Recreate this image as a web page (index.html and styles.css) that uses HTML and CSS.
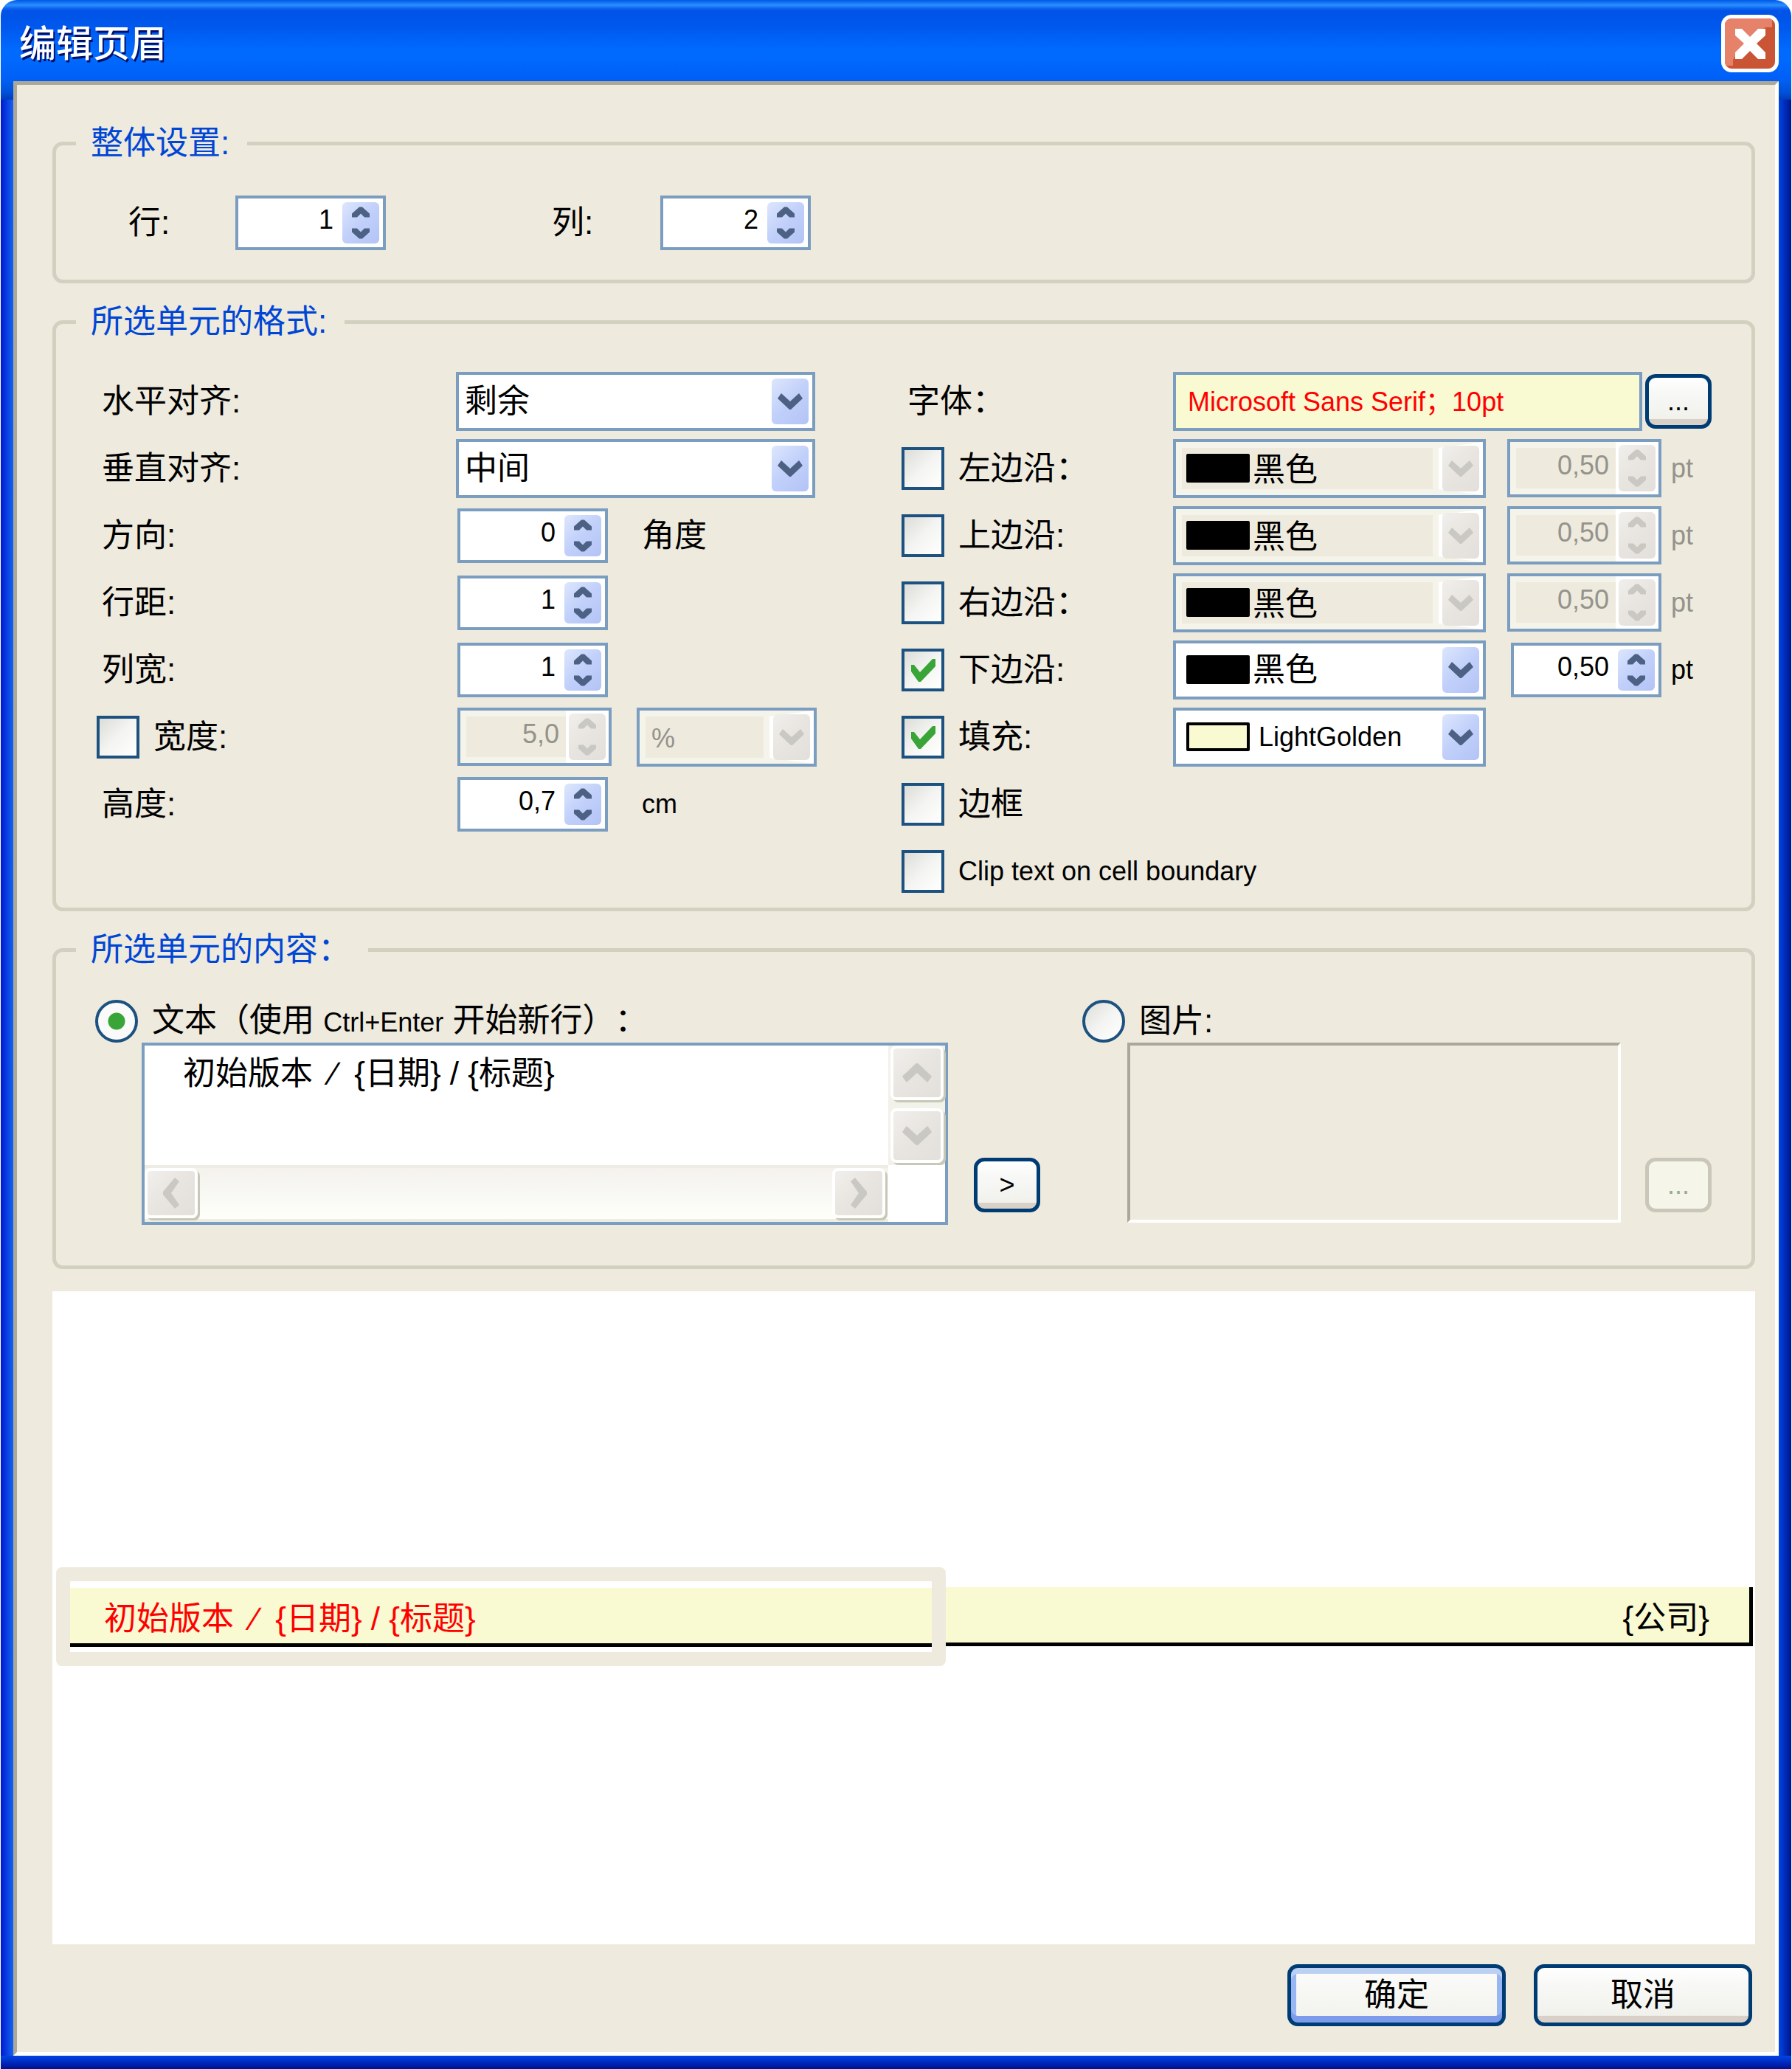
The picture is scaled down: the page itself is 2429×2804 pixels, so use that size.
FILE: index.html
```html
<!DOCTYPE html>
<html lang="zh-CN">
<head>
    <meta charset="UTF-8">
    <meta name="viewport" content="width=device-width, initial-scale=1.0">
    <title>编辑页眉</title>
    <link rel="stylesheet" href="styles.css">
</head>
<body>
    <!-- 共用图标 -->
    <svg class="icon-defs" aria-hidden="true">
        <symbol id="icon-up" viewBox="0 0 24 14"><path d="M0 14V9L10 0h4L24 9v5h-7l-5-5-5 5z"/></symbol>
        <symbol id="icon-down" viewBox="0 0 24 14"><path d="M0 0v5l10 9h4L24 5V0h-7l-5 5-5-5z"/></symbol>
        <symbol id="icon-drop" viewBox="0 0 34 22"><path d="M5 0L17 11 29 0l5 7L18 22h-2L0 7z"/></symbol>
        <symbol id="icon-rise" viewBox="0 0 34 22"><path d="M5 22L17 11 29 22l5-7L18 0h-2L0 15z"/></symbol>
    </svg>

    <div class="window">
        <div class="title-bar">
            <h1>编辑页眉</h1>
            <button class="close-btn" type="button" aria-label="关闭">
                <svg viewBox="0 0 68 68">
                    <path d="M0 0H64V12H56L42 18 20 42 11 56V64H0z" fill="#e6826a"/>
                    <path d="M14 14h9l11 11 11-11h10v9L43 34l12 12v9H45L34 44 23 55h-9V46l12-12L14 23z" fill="#fff"/>
                </svg>
            </button>
        </div>

        <form class="window-body">
            <fieldset class="group general">
                <legend>整体设置:</legend>
                <div class="general-row">
                    <label for="rows">行:</label>
                    <div class="spin">
                        <input type="text" id="rows" value="1">
                        <div class="spin-buttons">
                            <button type="button" aria-label="增加"><svg><use href="#icon-up"/></svg></button>
                            <button type="button" aria-label="减少"><svg><use href="#icon-down"/></svg></button>
                        </div>
                    </div>
                    <label for="cols" class="cols-label">列:</label>
                    <div class="spin">
                        <input type="text" id="cols" value="2">
                        <div class="spin-buttons">
                            <button type="button" aria-label="增加"><svg><use href="#icon-up"/></svg></button>
                            <button type="button" aria-label="减少"><svg><use href="#icon-down"/></svg></button>
                        </div>
                    </div>
                </div>
            </fieldset>

            <fieldset class="group format">
                <legend>所选单元的格式:</legend>
                <div class="format-columns">
                    <!-- 左列: 对齐和尺寸 -->
                    <div class="format-left">
                        <div class="row">
                            <label class="name" for="halign">水平对齐:</label>
                            <div class="combo wide">
                                <select id="halign"><option>剩余</option></select>
                                <span class="combo-arrow"><svg><use href="#icon-drop"/></svg></span>
                            </div>
                        </div>
                        <div class="row">
                            <label class="name" for="valign">垂直对齐:</label>
                            <div class="combo wide">
                                <select id="valign"><option>中间</option></select>
                                <span class="combo-arrow"><svg><use href="#icon-drop"/></svg></span>
                            </div>
                        </div>
                        <div class="row">
                            <label class="name" for="angle">方向:</label>
                            <div class="spin">
                                <input type="text" id="angle" value="0">
                                <div class="spin-buttons">
                                    <button type="button" aria-label="增加"><svg><use href="#icon-up"/></svg></button>
                                    <button type="button" aria-label="减少"><svg><use href="#icon-down"/></svg></button>
                                </div>
                            </div>
                            <span class="unit">角度</span>
                        </div>
                        <div class="row">
                            <label class="name" for="rowspan">行距:</label>
                            <div class="spin">
                                <input type="text" id="rowspan" value="1">
                                <div class="spin-buttons">
                                    <button type="button" aria-label="增加"><svg><use href="#icon-up"/></svg></button>
                                    <button type="button" aria-label="减少"><svg><use href="#icon-down"/></svg></button>
                                </div>
                            </div>
                        </div>
                        <div class="row">
                            <label class="name" for="colspan">列宽:</label>
                            <div class="spin">
                                <input type="text" id="colspan" value="1">
                                <div class="spin-buttons">
                                    <button type="button" aria-label="增加"><svg><use href="#icon-up"/></svg></button>
                                    <button type="button" aria-label="减少"><svg><use href="#icon-down"/></svg></button>
                                </div>
                            </div>
                        </div>
                        <div class="row">
                            <div class="name check">
                                <input type="checkbox" id="use-width">
                                <label for="use-width">宽度:</label>
                            </div>
                            <div class="spin disabled">
                                <input type="text" value="5,0" aria-label="宽度" disabled>
                                <div class="spin-buttons">
                                    <button type="button" aria-label="增加" disabled><svg><use href="#icon-up"/></svg></button>
                                    <button type="button" aria-label="减少" disabled><svg><use href="#icon-down"/></svg></button>
                                </div>
                            </div>
                            <div class="combo percent disabled">
                                <select class="latin" aria-label="宽度单位" disabled><option>%</option></select>
                                <span class="combo-arrow"><svg><use href="#icon-drop"/></svg></span>
                            </div>
                        </div>
                        <div class="row">
                            <label class="name" for="height">高度:</label>
                            <div class="spin">
                                <input type="text" id="height" value="0,7">
                                <div class="spin-buttons">
                                    <button type="button" aria-label="增加"><svg><use href="#icon-up"/></svg></button>
                                    <button type="button" aria-label="减少"><svg><use href="#icon-down"/></svg></button>
                                </div>
                            </div>
                            <span class="unit latin">cm</span>
                        </div>
                    </div>

                    <!-- 右列: 字体和边框 -->
                    <div class="format-right">
                        <div class="row">
                            <label class="name" for="font">字体：</label>
                            <input type="text" class="font-box latin" id="font" value="Microsoft Sans Serif；10pt" readonly>
                            <button type="button" class="btn small">...</button>
                        </div>
                        <div class="row">
                            <div class="name check">
                                <input type="checkbox" id="edge-left">
                                <label for="edge-left">左边沿：</label>
                            </div>
                            <div class="combo color disabled">
                                <select aria-label="左边沿颜色" disabled><option>黑色</option></select>
                                <span class="swatch black"></span>
                                <span class="combo-arrow"><svg><use href="#icon-drop"/></svg></span>
                            </div>
                            <div class="spin disabled">
                                <input type="text" value="0,50" aria-label="左边沿宽度" disabled>
                                <div class="spin-buttons">
                                    <button type="button" aria-label="增加" disabled><svg><use href="#icon-up"/></svg></button>
                                    <button type="button" aria-label="减少" disabled><svg><use href="#icon-down"/></svg></button>
                                </div>
                            </div>
                            <span class="unit latin disabled">pt</span>
                        </div>
                        <div class="row">
                            <div class="name check">
                                <input type="checkbox" id="edge-top">
                                <label for="edge-top">上边沿:</label>
                            </div>
                            <div class="combo color disabled">
                                <select aria-label="上边沿颜色" disabled><option>黑色</option></select>
                                <span class="swatch black"></span>
                                <span class="combo-arrow"><svg><use href="#icon-drop"/></svg></span>
                            </div>
                            <div class="spin disabled">
                                <input type="text" value="0,50" aria-label="上边沿宽度" disabled>
                                <div class="spin-buttons">
                                    <button type="button" aria-label="增加" disabled><svg><use href="#icon-up"/></svg></button>
                                    <button type="button" aria-label="减少" disabled><svg><use href="#icon-down"/></svg></button>
                                </div>
                            </div>
                            <span class="unit latin disabled">pt</span>
                        </div>
                        <div class="row">
                            <div class="name check">
                                <input type="checkbox" id="edge-right">
                                <label for="edge-right">右边沿：</label>
                            </div>
                            <div class="combo color disabled">
                                <select aria-label="右边沿颜色" disabled><option>黑色</option></select>
                                <span class="swatch black"></span>
                                <span class="combo-arrow"><svg><use href="#icon-drop"/></svg></span>
                            </div>
                            <div class="spin disabled">
                                <input type="text" value="0,50" aria-label="右边沿宽度" disabled>
                                <div class="spin-buttons">
                                    <button type="button" aria-label="增加" disabled><svg><use href="#icon-up"/></svg></button>
                                    <button type="button" aria-label="减少" disabled><svg><use href="#icon-down"/></svg></button>
                                </div>
                            </div>
                            <span class="unit latin disabled">pt</span>
                        </div>
                        <div class="row">
                            <div class="name check">
                                <input type="checkbox" id="edge-bottom" checked>
                                <label for="edge-bottom">下边沿:</label>
                            </div>
                            <div class="combo color">
                                <select aria-label="下边沿颜色"><option>黑色</option></select>
                                <span class="swatch black"></span>
                                <span class="combo-arrow"><svg><use href="#icon-drop"/></svg></span>
                            </div>
                            <div class="spin">
                                <input type="text" value="0,50" aria-label="下边沿宽度">
                                <div class="spin-buttons">
                                    <button type="button" aria-label="增加"><svg><use href="#icon-up"/></svg></button>
                                    <button type="button" aria-label="减少"><svg><use href="#icon-down"/></svg></button>
                                </div>
                            </div>
                            <span class="unit latin">pt</span>
                        </div>
                        <div class="row">
                            <div class="name check">
                                <input type="checkbox" id="fill" checked>
                                <label for="fill">填充:</label>
                            </div>
                            <div class="combo color fill">
                                <select class="latin" aria-label="填充颜色"><option>LightGolden</option></select>
                                <span class="swatch"></span>
                                <span class="combo-arrow"><svg><use href="#icon-drop"/></svg></span>
                            </div>
                        </div>
                        <div class="row">
                            <div class="name check">
                                <input type="checkbox" id="frame">
                                <label for="frame">边框</label>
                            </div>
                        </div>
                        <div class="row">
                            <div class="name check">
                                <input type="checkbox" id="clip">
                                <label class="latin" for="clip">Clip text on cell boundary</label>
                            </div>
                        </div>
                    </div>
                </div>
            </fieldset>

            <fieldset class="group content">
                <legend>所选单元的内容：</legend>
                <div class="content-columns">
                    <div class="content-text">
                        <div class="check">
                            <input type="radio" name="content" id="type-text" checked>
                            <label for="type-text">文本（使用 <span class="latin">Ctrl+Enter</span> 开始新行）：</label>
                        </div>
                        <div class="editor">
                            <textarea aria-label="文本">初始版本  ∕  {日期} / {标题}</textarea>
                            <div class="scroll vertical">
                                <button type="button" aria-label="向上" disabled><svg><use href="#icon-rise"/></svg></button>
                                <button type="button" aria-label="向下" disabled><svg><use href="#icon-drop"/></svg></button>
                            </div>
                            <div class="scroll horizontal">
                                <button type="button" aria-label="向左" disabled><svg class="tall" viewBox="0 0 22 42"><path d="M22 5L11 21 22 37l-6 5L0 23v-4L16 0z"/></svg></button>
                                <button type="button" aria-label="向右" disabled><svg class="tall" viewBox="0 0 22 42"><path d="M0 5l11 16L0 37l6 5 16-19v-4L6 0z"/></svg></button>
                            </div>
                        </div>
                    </div>
                    <button type="button" class="btn small">&gt;</button>
                    <div class="content-image">
                        <div class="check">
                            <input type="radio" name="content" id="type-image">
                            <label for="type-image">图片:</label>
                        </div>
                        <div class="image-box"></div>
                    </div>
                    <button type="button" class="btn small" disabled>...</button>
                </div>
            </fieldset>

            <div class="preview">
                <div class="cell selected"><span>初始版本  ∕  {日期} / {标题}</span></div>
                <div class="cell company"><span>{公司}</span></div>
            </div>

            <div class="actions">
                <button type="button" class="btn default">确定</button>
                <button type="button" class="btn">取消</button>
            </div>
        </form>
    </div>
</body>
</html>
```
FILE: styles.css
```css
* {
    box-sizing: border-box;
    margin: 0;
    padding: 0;
}

body {
    padding: 0 1px;
    font-family: 'Liberation Sans', 'Noto Sans CJK SC', sans-serif;
    font-size: 44px;
    line-height: 44px;
    text-spacing-trim: space-all;
    color: #000;
    background: #fff;
}

button, input, select, textarea {
    font: inherit;
    color: inherit;
}

button, select {
    cursor: pointer;
}

.latin {
    font-size: 36px;
}

.icon-defs {
    display: none;
}

/* 窗口 */
.window {
    display: flex;
    flex-direction: column;
    min-height: 100vh;
    padding: 0 17px 18px;
    border-radius: 22px 22px 0 0;
    background:
        linear-gradient(#0060f0, #0050d8 16px, #003db8) left 110px / 17px 25px no-repeat,
        linear-gradient(#0060f0, #0050d8 16px, #003db8) right 110px / 17px 25px no-repeat,
        linear-gradient(#0058e8, #2a8fff 7px, #0a5eee 12px, #0053e5 15px, #0058ee 36px, #006aff 68px, #006aff 78px, #005ef5 110px) top / 100% 110px no-repeat,
        linear-gradient(#0044e8, #000f90) bottom / 100% 18px no-repeat,
        linear-gradient(90deg, #0019cf, #1464f2) left / 17px 100% no-repeat,
        linear-gradient(90deg, #0046e6, #00138c) right / 17px 100% no-repeat;
}

.title-bar {
    display: flex;
    align-items: center;
    justify-content: space-between;
    height: 110px;
    padding: 8px 0 0 8px;
}

.title-bar h1 {
    padding-top: 2px;
    font-size: 50px;
    font-weight: 500;
    line-height: 60px;
    color: #fff;
    text-shadow: 2px 3px 0 #00116b;
}

.close-btn {
    width: 78px;
    height: 78px;
    border: 5px solid #fff;
    border-radius: 14px;
    background: #c95535;
    overflow: hidden;
}

.close-btn svg {
    display: block;
    width: 68px;
    height: 68px;
}

.window-body {
    flex: 1;
    display: flex;
    flex-direction: column;
    gap: 30px;
    padding: 57px 27px 35px 48px;
    border: 5px solid;
    border-color: #aca899 #fff #fff #aca899;
    background: #eeeade;
}

/* 分组框 */
.group {
    min-width: 0;
    border: 5px solid #d2d1bf;
    border-radius: 14px;
}

.group legend {
    margin-left: 27px;
    padding: 0 24px 0 20px;
    color: #0046d5;
}

.general-row {
    display: flex;
    align-items: center;
    padding: 49px 0 40px 98px;
}

.general-row label {
    width: 145px;
}

.general-row .cols-label {
    width: 147px;
    margin-left: 225px;
}

.format-columns {
    display: flex;
    padding: 40px 0 4px;
}

.format-left {
    flex: 0 0 1146px;
    padding-left: 62px;
}

.format-right {
    flex: 1;
}

.row {
    display: flex;
    align-items: center;
    height: 91px;
}

.name {
    flex: none;
    width: 482px;
}

.format-left .check.name {
    margin-left: -7px;
    width: 489px;
}

.format-right .name {
    width: 368px;
    white-space: nowrap;
}

.format-right label.name {
    padding-left: 8px;
}

.format-left .combo.wide {
    margin-left: -2px;
}

.unit {
    margin-left: 46px;
}

.format-right .unit {
    margin-left: 13px;
}

.unit.disabled {
    color: #94938c;
}

/* 复选框和单选框 */
.check {
    display: flex;
    align-items: center;
    gap: 19px;
}

.check input {
    flex: none;
    appearance: none;
    width: 58px;
    height: 58px;
    border: 4px solid #1c5180;
    background: linear-gradient(135deg, #dcdcd8, #f4f4f2 50%, #fff);
}

.check input[type="checkbox"]:checked {
    background: url("data:image/svg+xml,%3Csvg xmlns='http://www.w3.org/2000/svg' viewBox='0 0 50 50'%3E%3Cpath d='M9 18v9l10 14h3l20-21V10h-4L21 28l-8-10z' fill='%233aa537'/%3E%3C/svg%3E"), linear-gradient(135deg, #dcdcd8, #f4f4f2 50%, #fff);
}

.check input[type="radio"] {
    border-radius: 50%;
}

.check input[type="radio"]:checked {
    background: radial-gradient(circle, #3aa537 11px, #fafafa 12px);
}

/* 数字微调框 */
.spin {
    flex: none;
    display: flex;
    width: 204px;
    height: 74px;
    padding: 5px;
    border: 4px solid #7a9dc0;
    background: #fff;
}

.spin input {
    flex: 1;
    min-width: 0;
    padding: 0 12px 8px 0;
    border: 0;
    outline: 0;
    background: none;
    font-size: 36px;
    text-align: right;
}

.spin-buttons {
    display: flex;
    flex-direction: column;
    justify-content: space-between;
    width: 50px;
    padding: 6px 0;
    border-radius: 6px;
    background: linear-gradient(135deg, #dde6fd, #c1d0fa 50%, #b3c3f5);
}

.spin-buttons button {
    height: 15px;
    border: 0;
    background: none;
}

.spin-buttons svg {
    display: block;
    width: 24px;
    height: 15px;
    margin: 0 auto;
    fill: #4d6185;
}

.spin.disabled {
    width: 209px;
    height: 79px;
    padding: 4px;
}

.spin.disabled input {
    margin: -4px 4px -4px -4px;
    padding: 0 9px 8px 0;
    border: 8px solid #f5f4ea;
    border-right-width: 0;
    background: #eeeade;
    color: #94938c;
}

.spin.disabled .spin-buttons,
.combo.disabled .combo-arrow {
    background: linear-gradient(135deg, #f1efec, #e8e5e0 50%, #e3dfda);
}

.disabled svg {
    fill: #c9c8c2;
}

/* 下拉框 */
.combo {
    flex: none;
    display: grid;
    grid-template-columns: auto 1fr auto;
    grid-template-rows: 100%;
    align-items: center;
    height: 80px;
    border: 4px solid #7a9dc0;
    background: #fff;
}

.combo select {
    grid-area: 1 / 1 / 2 / 4;
    appearance: none;
    width: 100%;
    height: 100%;
    padding-left: 8px;
    border: 0;
    outline: 0;
    background: none;
    line-height: 60px;
    opacity: 1;
}

.combo-arrow {
    grid-area: 1 / 3;
    display: flex;
    align-items: center;
    justify-content: center;
    width: 50px;
    height: 62px;
    margin-right: 5px;
    border-radius: 6px;
    background: linear-gradient(135deg, #dde6fd, #c1d0fa 50%, #b3c3f5);
    pointer-events: none;
}

.combo-arrow svg {
    width: 34px;
    height: 22px;
    fill: #4d6185;
}

.combo.disabled .combo-arrow svg {
    fill: #c9c8c2;
}

.combo.disabled select {
    border: 8px solid #f5f4ea;
    border-right: 60px solid #fff;
    background: #eeeade;
    box-shadow: inset -8px 0 0 #f5f4ea;
}

.combo.wide {
    width: 487px;
}

.combo.percent {
    width: 244px;
    margin-left: 34px;
}

.combo.percent select {
    color: #94938c;
}

.combo.color {
    width: 424px;
}

.combo.color select {
    padding-left: 104px;
}

.combo.color.disabled select {
    padding-left: 96px;
    color: #000;
}

.combo.color.fill select {
    padding-left: 112px;
}

.combo.color + .spin {
    margin-left: 34px;
}

.combo.color + .spin.disabled {
    margin-left: 29px;
}

.swatch {
    grid-area: 1 / 1;
    width: 86px;
    height: 39px;
    margin-left: 14px;
    border: 4px solid #000;
    border-radius: 2px;
    background: #f9f9d2;
    pointer-events: none;
}

.swatch.black {
    background: #000;
}

.font-box {
    width: 636px;
    height: 80px;
    margin-right: 4px;
    padding: 0 16px 6px;
    border: 4px solid #7a9dc0;
    background: #f9f9d2;
    color: #f00;
}

/* 按钮 */
.btn {
    width: 296px;
    height: 84px;
    border: 5px solid #003c74;
    border-radius: 14px;
    background: linear-gradient(#fff, #f8f8f7 30%, #f1f1ec 87%, #d9d0c8 88%, #d9d0c8);
}

.btn.small {
    flex: none;
    width: 90px;
    height: 74px;
    font-size: 36px;
}

.btn:disabled {
    border-color: #cac7b9;
    background: #f5f5ea;
    color: #9aab8e;
}

.btn.default {
    background: linear-gradient(#fcfcfb, #f1f1ec) padding-box;
    box-shadow: inset 0 8px 0 #bcd0f2, inset 0 -9px 0 #7d9beb, inset 7px 0 0 #98b6f2, inset -7px 0 0 #98b6f2;
}

/* 单元内容 */
.content-columns {
    display: flex;
    align-items: flex-end;
    padding: 46px 54px 55px 53px;
}

.content-columns .btn {
    margin-bottom: 17px;
}

.content-text {
    flex: 0 0 1156px;
    margin-right: 35px;
}

.editor {
    display: grid;
    grid-template-columns: 1fr 77px;
    grid-template-rows: 162px 77px;
    height: 247px;
    margin-left: 63px;
    border: 4px solid #7a9dc0;
    background: #fff;
}

.editor textarea {
    padding: 16px 52px;
    border: 0;
    outline: 0;
    resize: none;
    overflow: hidden;
    background: none;
}

.scroll {
    display: flex;
    justify-content: space-between;
}

.scroll button {
    display: flex;
    align-items: center;
    justify-content: center;
    width: 72px;
    height: 74px;
    border: 4px solid #fff;
    border-radius: 8px;
    background: linear-gradient(135deg, #f1efec, #e8e5e0 50%, #e3dfda);
    box-shadow: 3px 3px 0 #c8c8b6;
}

.scroll svg {
    width: 42px;
    height: 26px;
    fill: #c9c8c2;
}

.scroll svg.tall {
    width: 26px;
    height: 42px;
}

.scroll.vertical {
    flex-direction: column;
    padding: 0 0 3px 3px;
    background: #f2f1ea;
}

.scroll.horizontal {
    padding-right: 4px;
    border-top: 4px solid #eeede5;
    border-bottom: 4px solid #eeede5;
    background: linear-gradient(#f5f2ed, #f8f8f4 50%, #fffffa);
}

.scroll.horizontal button {
    height: 68px;
}

.content-image {
    flex: 1;
    margin: 0 33px 0 57px;
}

.image-box {
    height: 244px;
    margin: 0 0 3px 61px;
    border: 4px solid;
    border-color: #aca899 #fff #fff #aca899;
}

/* 预览 */
.preview {
    flex: 1;
    display: flex;
    align-items: center;
    padding: 0 3px 4px 5px;
    background: #fff;
}

.cell {
    display: flex;
    align-items: center;
}

.cell.selected {
    flex: 0 0 1206px;
    border: 19px solid #eeeade;
    border-radius: 8px;
    padding: 9px 0 7px;
    color: #f00;
}

.cell span {
    flex: 1;
    height: 80px;
    padding: 20px 46px 0;
    border-bottom: 5px solid #000;
    background: #f9f9d2;
    white-space: pre;
}

.cell.company {
    flex: 1;
}

.cell.company span {
    padding-right: 54px;
    border-right: 5px solid #000;
    text-align: right;
}

.actions {
    display: flex;
    justify-content: flex-end;
    gap: 38px;
    margin-top: -3px;
    padding-right: 4px;
}
```
